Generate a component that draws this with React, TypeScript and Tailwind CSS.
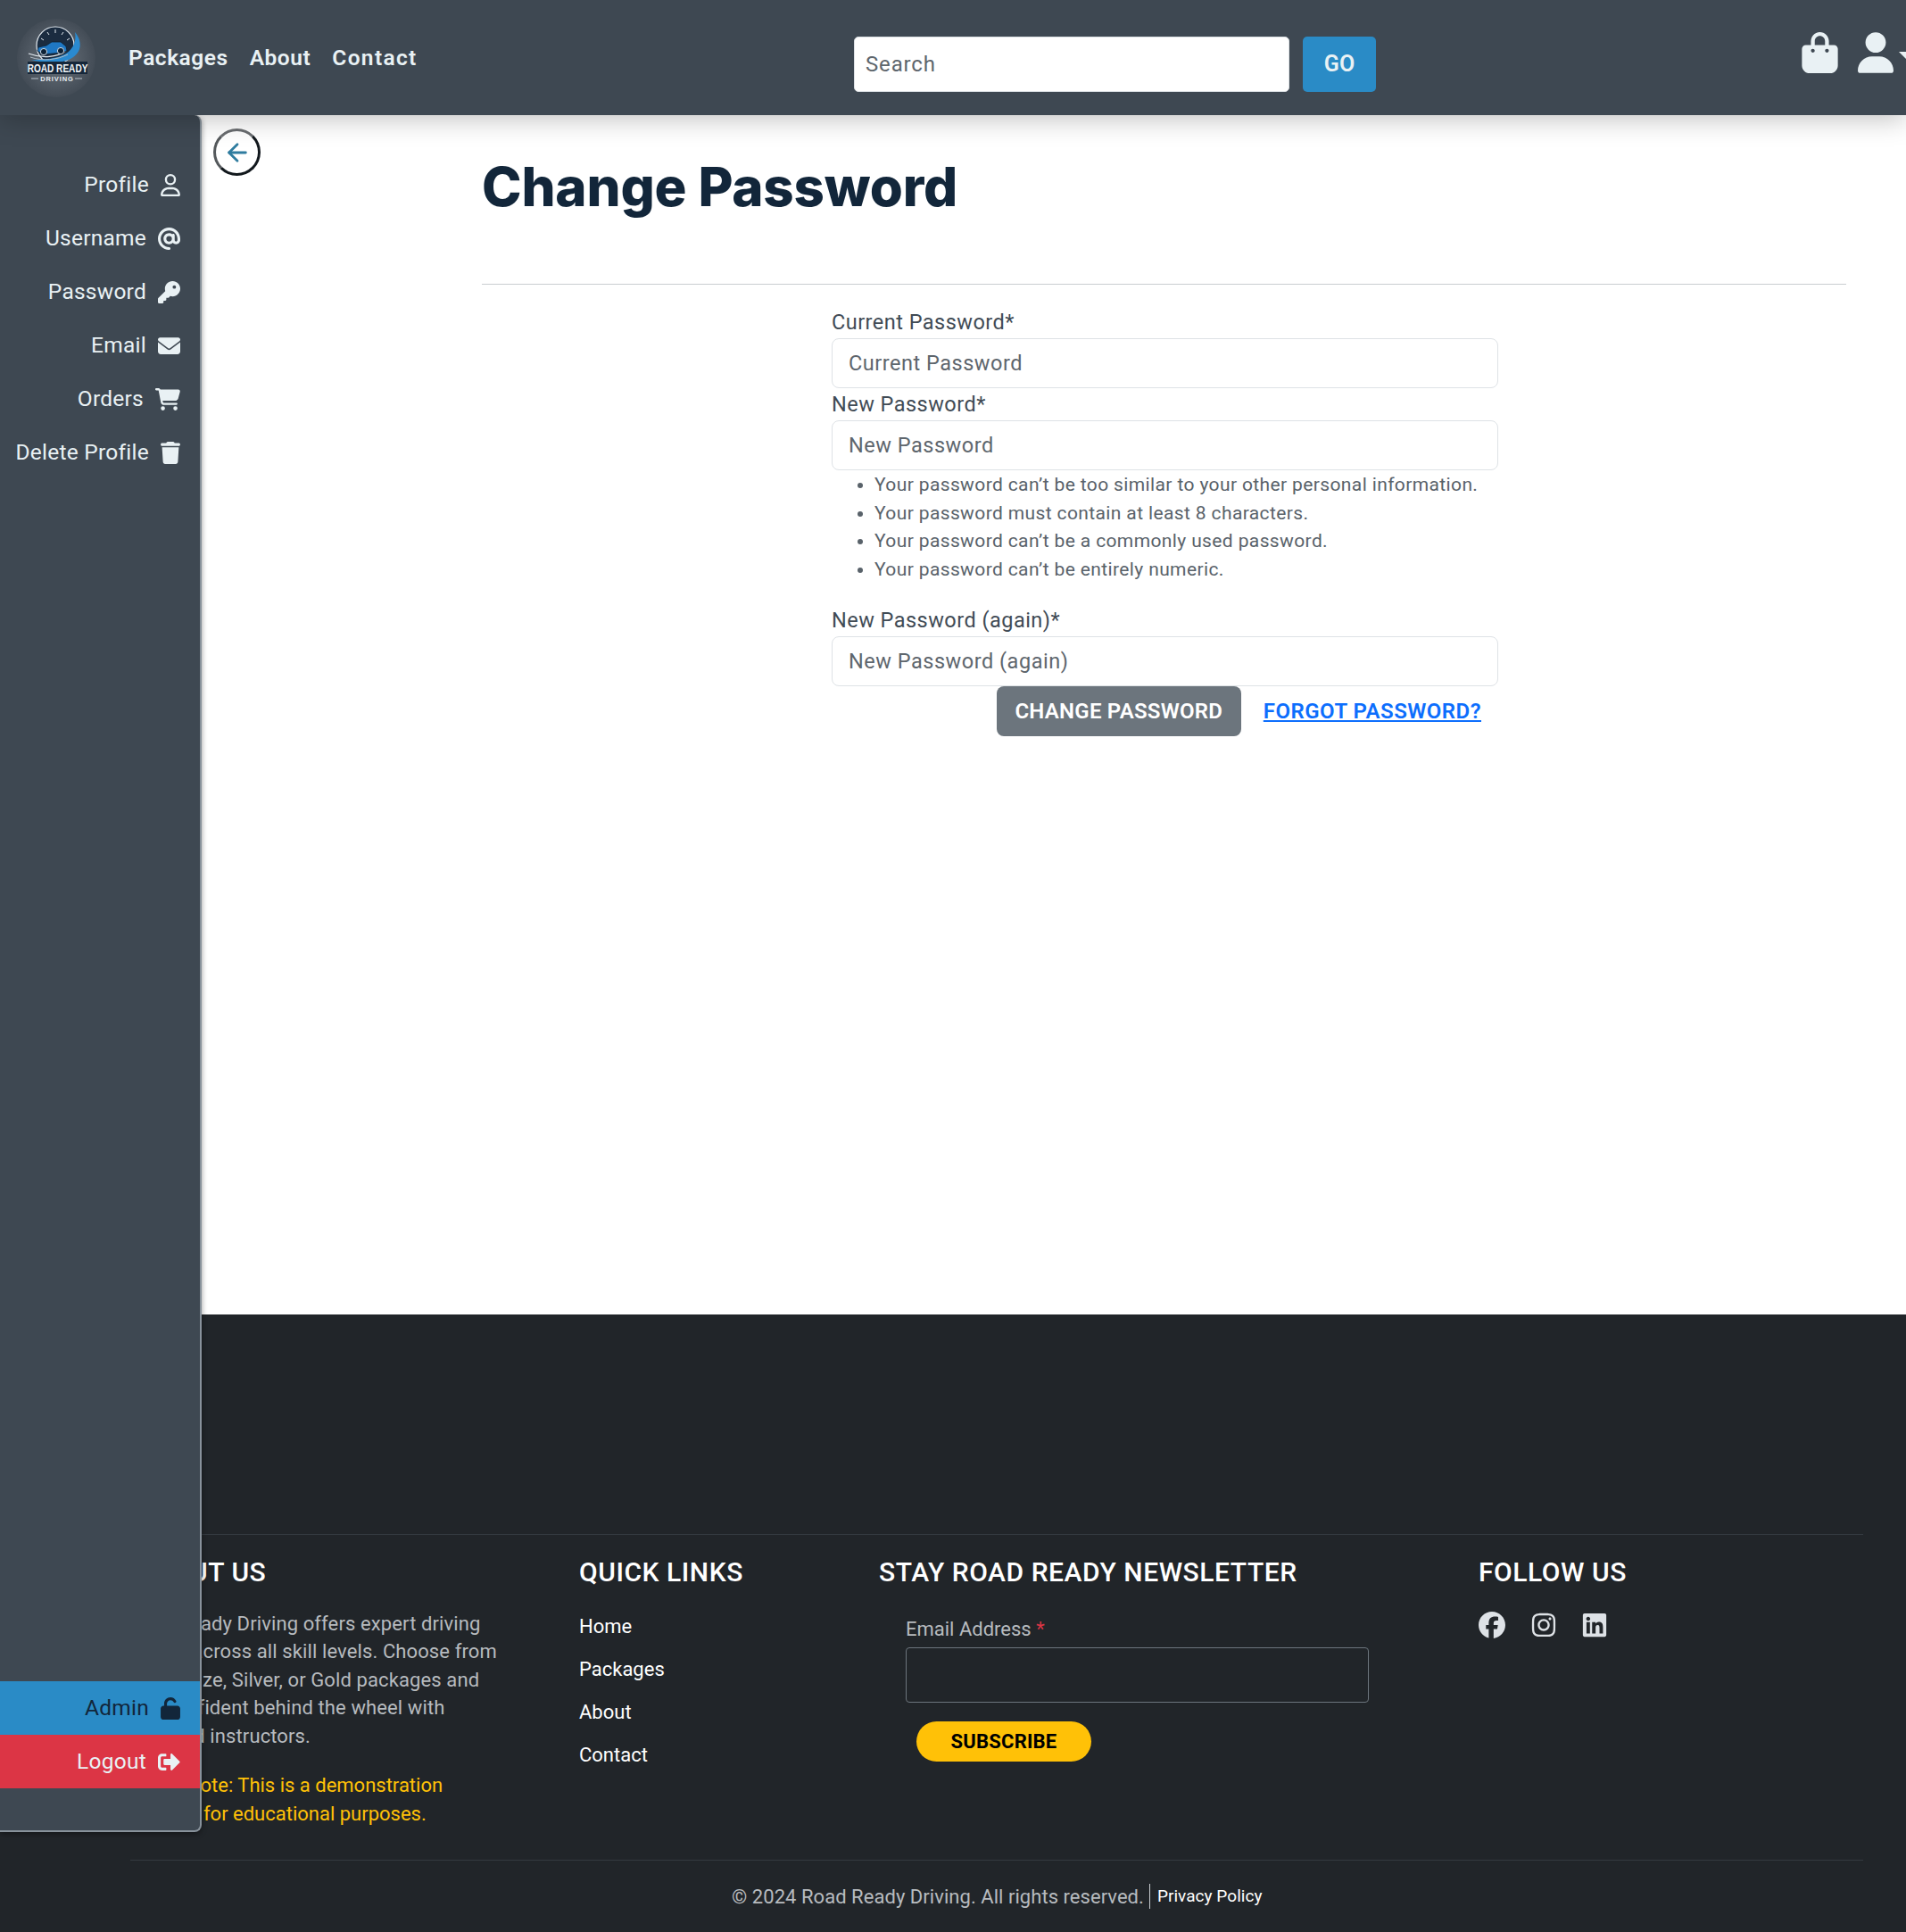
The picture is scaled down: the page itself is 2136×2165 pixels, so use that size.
import type { ReactNode } from "react";
import { ArrowLeft } from "lucide-react";
import {
  FaAt,
  FaBagShopping,
  FaCartShopping,
  FaEnvelope,
  FaFacebook,
  FaInstagram,
  FaKey,
  FaLinkedin,
  FaRegUser,
  FaTrash,
  FaUnlock,
  FaUser,
} from "react-icons/fa6";
import { FaSignOutAlt } from "react-icons/fa";

const sideLinks: { label: string; icon: ReactNode }[] = [
  { label: "Profile", icon: <FaRegUser className="h-[25px] w-[22px]" /> },
  { label: "Username", icon: <FaAt className="h-[25px] w-[25px]" /> },
  { label: "Password", icon: <FaKey className="h-[25px] w-[25px]" /> },
  { label: "Email", icon: <FaEnvelope className="h-[25px] w-[25px]" /> },
  { label: "Orders", icon: <FaCartShopping className="h-[25px] w-[28px]" /> },
  { label: "Delete Profile", icon: <FaTrash className="h-[25px] w-[22px]" /> },
];

function Logo() {
  return (
    <svg viewBox="0 0 90 90" className="h-[90px] w-[90px]">
      <defs>
        <radialGradient id="halo">
          <stop offset="0%" stopColor="#6a727b" />
          <stop offset="75%" stopColor="#4d5660" />
          <stop offset="100%" stopColor="#434c56" />
        </radialGradient>
      </defs>
      <circle cx="45" cy="45" r="44" fill="url(#halo)" />
      <circle cx="44" cy="31" r="21" fill="#1b2c40" stroke="#e3eaf0" strokeWidth="1.2" />
      <path d="M28 23 L31 25 M35 16 L37 19 M44 13 L44 17 M53 16 L51 19 M60 23 L57 25" stroke="#e3eaf0" strokeWidth="1" />
      <path d="M66 16 C76 28 74 44 52 49 C40 51 28 50 17 47 C32 47 46 46 56 40 C64 35 68 26 66 16 Z" fill="#2a8ad0" />
      <path d="M14 40 C30 46 46 44 56 37" fill="none" stroke="#e6edf3" strokeWidth="1.2" />
      <path d="M16 44 C30 49 46 47 58 41" fill="none" stroke="#aebac5" strokeWidth="1" />
      <path d="M24 37 L25 33 L34 31 L40 27 L50 27 L56 32 L57 37 L52 39 L30 41 Z" fill="#1f78c4" stroke="#0e2236" strokeWidth="0.8" />
      <circle cx="31" cy="38" r="3.6" fill="#0e2236" stroke="#dfe7ee" strokeWidth="0.9" />
      <circle cx="50" cy="37" r="3.6" fill="#0e2236" stroke="#dfe7ee" strokeWidth="0.9" />
      <rect x="13" y="49" width="67" height="14" fill="#16273a" />
      <text transform="translate(46.5 60.5) scale(0.84 1)" textAnchor="middle" fontFamily="'Liberation Sans', sans-serif" fontSize="12" fontWeight="700" fill="#f1f5f8">ROAD READY</text>
      <path d="M17 68H25M66 68H74" stroke="#c6d0d9" strokeWidth="0.9" />
      <text x="46" y="71" textAnchor="middle" fontFamily="'Liberation Sans', sans-serif" fontSize="7.5" fontWeight="700" fill="#e6edf3" letterSpacing="0.9">DRIVING</text>
    </svg>
  );
}

function Field({ label, placeholder }: { label: string; placeholder: string }) {
  return (
    <div>
      <label className="block h-[36px] text-[23.5px] leading-[36px] tracking-[0.02em] text-[#414b55]">{label}</label>
      <input
        placeholder={placeholder}
        className="h-[56px] w-full rounded-[8px] border border-[#dee2e6] bg-white px-[18px] text-[23.5px] tracking-[0.022em] text-[#212529] outline-none placeholder:text-[#5e666d]"
      />
    </div>
  );
}

function FooterHeading({ children }: { children: ReactNode }) {
  return <h4 className="text-[30px] font-medium leading-[36px] tracking-[0.018em] text-white">{children}</h4>;
}

export default function App() {
  return (
    <div className="relative w-[2136px] overflow-hidden bg-white font-['Roboto',sans-serif]">
      <header className="relative z-20 flex h-[129px] items-start bg-[#3e4852] shadow-[0_4px_28px_rgba(0,0,0,0.25)]">
        <div className="ml-[18px] mt-[20px] shrink-0">
          <Logo />
        </div>
        <nav className="ml-[36px] mt-[47px] flex w-[323px] shrink-0 gap-[24px] text-[24.5px] font-semibold leading-[36px] tracking-[0.022em] text-[#e9f1f4]">
          <a>Packages</a>
          <a>About</a>
          <a className="tracking-[0.055em]">Contact</a>
        </nav>
        <div className="ml-[490px] mt-[41px] flex shrink-0 gap-[15px]">
          <input
            placeholder="Search"
            className="h-[62px] w-[488px] rounded-[5px] border border-[#dee2e6] bg-white px-[12px] text-[24px] tracking-[0.035em] outline-none placeholder:text-[#5e666d]"
          />
          <button className="h-[62px] w-[82px] rounded-[5px] bg-[#2a8bc6] text-[25px] font-semibold text-[#e9f1f4]">GO</button>
        </div>
        <div className="ml-[477px] mt-[36px] flex shrink-0 text-[#e9f1f4]">
          <FaBagShopping className="h-[46px] w-[41px] shrink-0" />
          <FaUser className="ml-[22px] h-[46px] w-[40px] shrink-0" />
          <div className="ml-[6px] mt-[22px] h-0 w-0 shrink-0 border-x-[9px] border-t-[9px] border-x-transparent border-t-[#e9f1f4]" />
        </div>
      </header>

      <aside className="absolute left-0 top-[129px] z-10 flex h-[1924px] w-[226px] flex-col rounded-r-[8px] border-r-2 border-b-2 border-[#88929b] bg-[#3e4852] pt-[48px] text-[24.5px] leading-[60px] tracking-[0.01em] text-[#e9f1f4] shadow-[0_2px_6px_rgba(0,0,0,0.4)]">
        {sideLinks.map((item) => (
          <a key={item.label} className="flex h-[60px] items-center justify-end gap-[13px] pr-[22px]">
            <span>{item.label}</span>
            {item.icon}
          </a>
        ))}
        <div className="mt-auto mb-[47px]">
          <a className="flex h-[60px] items-center justify-end gap-[13px] bg-[#2a8bc6] pr-[22px] text-[#12263a]">
            <span>Admin</span>
            <FaUnlock className="h-[25px] w-[22px]" />
          </a>
          <a className="flex h-[60px] items-center justify-end gap-[13px] bg-[#dc3545] pr-[22px]">
            <span>Logout</span>
            <FaSignOutAlt className="h-[25px] w-[25px]" />
          </a>
        </div>
      </aside>

      <main className="flex h-[1344px] pl-[224px]">
        <div className="w-[316px] pl-[15px] pt-[15px]">
          <button className="grid h-[53px] w-[53px] place-items-center rounded-full border-[3px] border-[#12181d] border-l-[#55595c] border-t-[#6a6d70] bg-white text-[#2f7c9f]">
            <ArrowLeft size={32} strokeWidth={2.1} />
          </button>
        </div>
        <div className="flex-1 pr-[67px]">
          <h1 className="mt-[44px] h-[72px] font-['Inter',sans-serif] text-[60px] font-extrabold leading-[72px] tracking-[-0.003em] text-[#12263a]">Change Password</h1>
          <hr className="mt-[73px] border-t border-[#c9cdd1]" />
          <form className="ml-[392px] mt-[24px] w-[747px]">
            <Field label="Current Password*" placeholder="Current Password" />
            <Field label="New Password*" placeholder="New Password" />
            <ul className="ml-[48px] mt-[1px] list-disc text-[21px] leading-[31.7px] tracking-[0.018em] text-[#59626a]">
              <li>Your password can’t be too similar to your other personal information.</li>
              <li>Your password must contain at least 8 characters.</li>
              <li>Your password can’t be a commonly used password.</li>
              <li>Your password can’t be entirely numeric.</li>
            </ul>
            <div className="mt-[22px]">
              <Field label="New Password (again)*" placeholder="New Password (again)" />
            </div>
            <div className="flex items-center justify-end gap-[25px] pr-[19px]">
              <button className="h-[56px] w-[274px] rounded-[8px] bg-[#6c757d] text-[24px] font-semibold tracking-[0.01em] text-white">CHANGE PASSWORD</button>
              <a className="text-[24px] font-semibold tracking-[0.02em] text-[#0d6efd] underline">FORGOT PASSWORD?</a>
            </div>
          </form>
        </div>
      </main>

      <footer className="h-[692px] bg-[#212529] pl-[146px] pr-[48px] pt-[246px]">
        <div className="border-t border-[#343a40] pl-[6px] pt-[24px]">
          <div className="grid h-[340px] grid-cols-[497px_336px_672px_1fr]">
            <div>
              <FooterHeading>ABOUT US</FooterHeading>
              <p className="-ml-[9px] mt-[24px] text-[22px] leading-[31.4px] tracking-[0.005em] text-[#b7bbbf]">
                Road Ready Driving offers expert driving
                <br />
                drivers across all skill levels. Choose from
                <br />
                our Bronze, Silver, or Gold packages and
                <br />
                feel confident behind the wheel with
                <br />
                <span className="ml-[5px]">certified instructors.</span>
              </p>
              <p className="-ml-[11px] mt-[24px] text-[22px] leading-[32px] text-[#ffc107]">
                Please note: This is a demonstration
                <br />
                site only for educational purposes.
              </p>
            </div>
            <div>
              <FooterHeading>QUICK LINKS</FooterHeading>
              <ul className="mt-[27px] space-y-[16px] text-[22px] leading-[32px] text-white">
                <li>Home</li>
                <li>Packages</li>
                <li>About</li>
                <li>Contact</li>
              </ul>
            </div>
            <div>
              <FooterHeading>STAY ROAD READY NEWSLETTER</FooterHeading>
              <div className="ml-[30px] mt-[30px] w-[519px]">
                <label className="block text-[22px] leading-[32px] text-[#b7bbbf]">
                  Email Address <span className="text-[#dc3545]">*</span>
                </label>
                <input className="mt-[4px] h-[62px] w-full rounded-[4px] border border-[#6c757d] bg-transparent outline-none" />
                <button className="ml-[12px] mt-[21px] h-[45px] w-[196px] rounded-full bg-[#ffc107] text-[22px] font-bold tracking-[0.01em] text-black">SUBSCRIBE</button>
              </div>
            </div>
            <div>
              <FooterHeading>FOLLOW US</FooterHeading>
              <div className="mt-[26px] flex gap-[27.5px] text-[#dee2e6]">
                <FaFacebook size={30} />
                <FaInstagram size={30} />
                <FaLinkedin size={30} />
              </div>
            </div>
          </div>
        </div>
        <div className="flex h-[81px] items-center border-t border-[#343a40] pl-[674px] text-[22px] tracking-[0.002em] text-[#b7bbbf]">
          <span>© 2024 Road Ready Driving. All rights reserved.</span>
          <span className="ml-[6px] border-l border-[#c9cdd1] pl-[8px] text-[19px] text-white">Privacy Policy</span>
        </div>
      </footer>
    </div>
  );
}
